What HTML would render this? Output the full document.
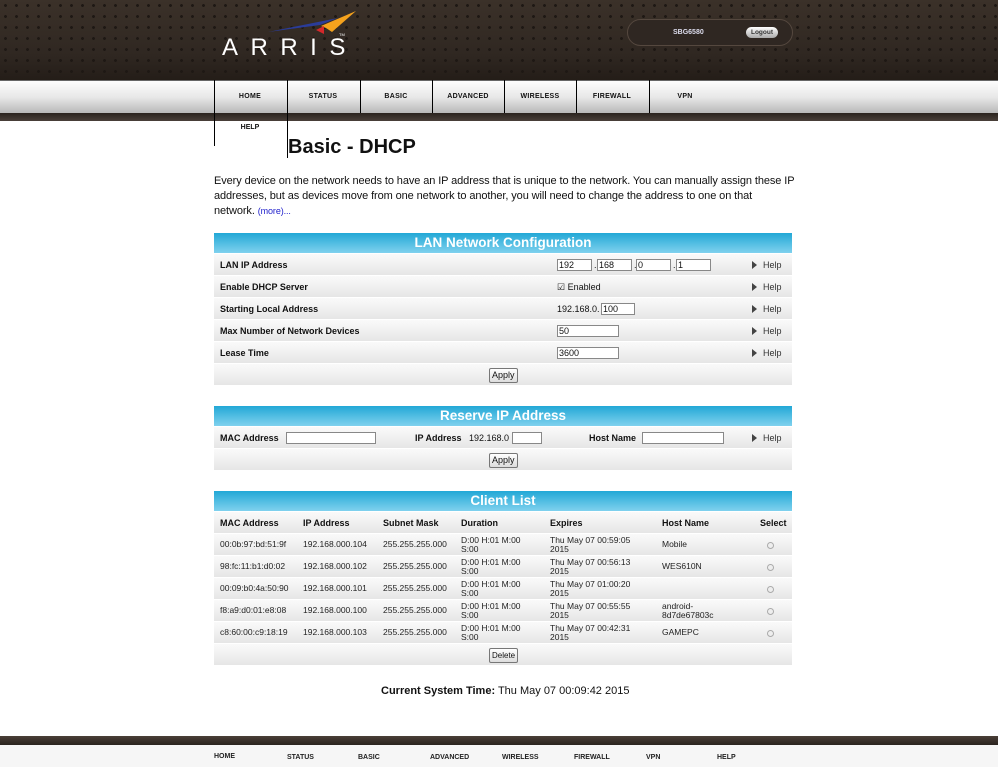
<!DOCTYPE html>
<html><head><meta charset="utf-8"><style>
*{margin:0;padding:0;box-sizing:border-box}
body{width:998px;height:767px;position:relative;overflow:hidden;background:#fff;font-family:"Liberation Sans",Arial,sans-serif;color:#111}
.a{position:absolute}
#hdr{left:0;top:0;width:998px;height:80px;background:radial-gradient(circle,#1e1814 1.3px,transparent 1.6px) 0 0/11px 11px,linear-gradient(#3b3129,#2f2721 70%,#241d18)}
#nav{left:0;top:80px;width:998px;height:33px;background:linear-gradient(#fdfdfd,#e8e8e8 50%,#b8b8b8);border-top:1px solid #666}
#navb{left:0;top:113px;width:998px;height:8px;background:linear-gradient(#2a231e,#4a403a);}
.ni{position:absolute;top:80px;height:33px;width:72px;font-size:7px;font-weight:bold;text-align:center;line-height:33px;letter-spacing:.3px}
.vl{position:absolute;width:1px;background:#000}
h1{position:absolute;left:288px;top:136px;font-size:20px;font-weight:bold}
.p{left:214px;top:174px;width:590px;font-size:11px;line-height:15px;letter-spacing:-0.1px}
.p span{color:#22c;font-size:9px}
.th{position:absolute;left:214px;width:578px;height:20px;background:linear-gradient(#22a8d6,#7fd1ee);color:#fff;font-weight:bold;font-size:13.5px;text-align:center;line-height:20px}
.r{position:absolute;left:214px;width:578px;height:22px;background:linear-gradient(#fafafa,#e6e6e6);border-bottom:1px solid #fff;font-size:9px}
.r b{position:absolute;top:6px;left:6px}
.r .t{position:absolute;top:6px}
.hp{position:absolute;left:538px;top:6px;font-size:9px;color:#333}
.hp:before{content:"";display:inline-block;border-left:5px solid #444;border-top:4px solid transparent;border-bottom:4px solid transparent;margin-right:6px;vertical-align:-1px}
.in{position:absolute;top:5px;height:12px;border:1px solid #888;background:#fff;font-size:9px;line-height:10px;padding-left:1px}
.btn{position:absolute;top:4px;left:275px;height:15px;border:1px solid #777;border-radius:2px;background:linear-gradient(#fff,#ddd);font-size:9px;line-height:13px;padding:0 2px}
.c{position:absolute;font-size:8.5px;line-height:9px;color:#222}
.rad{position:absolute;left:553px;top:8px;width:7px;height:7px;border-radius:50%;border:1px solid #aaa;background:#eee}
#ftb{left:0;top:736px;width:998px;height:9px;background:linear-gradient(#4a3f37,#2a231e)}
#ft{left:0;top:745px;width:998px;height:22px;background:#f6f6f6}
.fi{position:absolute;top:754px;font-size:7px;font-weight:bold;color:#222}
</style></head><body>
<div id="hdr" class="a"></div>
<svg class="a" style="left:220px;top:8px" width="145" height="52">
<path d="M48 24 L118 10 L100 17 Z" fill="#2a3c9a"/>
<path d="M101 18 L136 3 L112 24 L106 20 Z" fill="#f5a21d"/>
<path d="M96 22 L104 18 L104 26 Z" fill="#d6282b"/>
<text x="2" y="47" font-family="Liberation Sans" font-size="24" fill="#fff" letter-spacing="12.5">ARRIS</text>
<text x="119" y="28" font-size="4" fill="#fff">TM</text>
</svg>
<div class="a" style="left:627px;top:19px;width:166px;height:27px;border:1px solid #55483f;border-radius:14px;background:#2f2722"></div>
<div class="a" style="left:673px;top:29px;font-size:7px;font-weight:bold;color:#dde">SBG6580</div>
<div class="a" style="left:746px;top:27px;width:32px;height:11px;border-radius:6px;background:linear-gradient(#fff,#aaa);font-size:6.5px;font-weight:bold;text-align:center;line-height:11px;color:#333">Logout</div>
<div id="nav" class="a"></div>
<div id="navb" class="a"></div>
<div class="ni" style="left:214px">HOME</div><div class="ni" style="left:287px">STATUS</div><div class="ni" style="left:360px">BASIC</div><div class="ni" style="left:432px">ADVANCED</div><div class="ni" style="left:504px">WIRELESS</div><div class="ni" style="left:576px">FIREWALL</div><div class="ni" style="left:649px">VPN</div>
<div class="a" style="left:214px;top:124px;width:72px;text-align:center;font-size:7px;font-weight:bold">HELP</div>
<div class="vl" style="left:214px;top:80px;height:66px"></div><div class="vl" style="left:287px;top:80px;height:78px"></div>
<div class="vl" style="left:360px;top:80px;height:33px"></div><div class="vl" style="left:432px;top:80px;height:33px"></div><div class="vl" style="left:504px;top:80px;height:33px"></div><div class="vl" style="left:576px;top:80px;height:33px"></div><div class="vl" style="left:649px;top:80px;height:33px"></div>
<h1>Basic - DHCP</h1>
<div class="a p">Every device on the network needs to have an IP address that is unique to the network. You can manually assign these IP<br>addresses, but as devices move from one network to another, you will need to change the address to one on that<br>network. <span>(more)...</span></div>

<div class="th" style="top:233px">LAN Network Configuration</div>
<div class="r" style="top:254px"><b>LAN IP Address</b><div class="in" style="left:343px;width:35px">192</div><span class="t" style="left:380px">.</span><div class="in" style="left:383px;width:35px">168</div><span class="t" style="left:420px">.</span><div class="in" style="left:422px;width:35px">0</div><span class="t" style="left:459px">.</span><div class="in" style="left:462px;width:35px">1</div><span class="hp">Help</span></div>
<div class="r" style="top:276px"><b>Enable DHCP Server</b><span class="t" style="left:343px">☑ Enabled</span><span class="hp">Help</span></div>
<div class="r" style="top:298px"><b>Starting Local Address</b><span class="t" style="left:343px">192.168.0.</span><div class="in" style="left:387px;width:34px">100</div><span class="hp">Help</span></div>
<div class="r" style="top:320px"><b>Max Number of Network Devices</b><div class="in" style="left:343px;width:62px">50</div><span class="hp">Help</span></div>
<div class="r" style="top:342px"><b>Lease Time</b><div class="in" style="left:343px;width:62px">3600</div><span class="hp">Help</span></div>
<div class="r" style="top:364px"><div class="btn">Apply</div></div>

<div class="th" style="top:406px">Reserve IP Address</div>
<div class="r" style="top:427px"><b>MAC Address</b><div class="in" style="left:72px;width:90px"></div><b style="left:201px">IP Address</b><span class="t" style="left:255px">192.168.0</span><div class="in" style="left:298px;width:30px"></div><b style="left:375px">Host Name</b><div class="in" style="left:428px;width:82px"></div><span class="hp">Help</span></div>
<div class="r" style="top:449px"><div class="btn">Apply</div></div>

<div class="th" style="top:491px">Client List</div>
<div class="r" style="top:512px;font-weight:bold"><span class="t" style="left:6px">MAC Address</span><span class="t" style="left:89px">IP Address</span><span class="t" style="left:169px">Subnet Mask</span><span class="t" style="left:247px">Duration</span><span class="t" style="left:336px">Expires</span><span class="t" style="left:448px">Host Name</span><span class="t" style="left:546px">Select</span></div>
<div class="r" style="top:534px"><span class="c" style="left:6px;top:6px">00:0b:97:bd:51:9f</span><span class="c" style="left:89px;top:6px">192.168.000.104</span><span class="c" style="left:169px;top:6px">255.255.255.000</span><span class="c" style="left:247px;top:2px">D:00 H:01 M:00<br>S:00</span><span class="c" style="left:336px;top:2px">Thu May 07 00:59:05<br>2015</span><span class="c" style="left:448px;top:6px">Mobile</span><span class="rad"></span></div>
<div class="r" style="top:556px"><span class="c" style="left:6px;top:6px">98:fc:11:b1:d0:02</span><span class="c" style="left:89px;top:6px">192.168.000.102</span><span class="c" style="left:169px;top:6px">255.255.255.000</span><span class="c" style="left:247px;top:2px">D:00 H:01 M:00<br>S:00</span><span class="c" style="left:336px;top:2px">Thu May 07 00:56:13<br>2015</span><span class="c" style="left:448px;top:6px">WES610N</span><span class="rad"></span></div>
<div class="r" style="top:578px"><span class="c" style="left:6px;top:6px">00:09:b0:4a:50:90</span><span class="c" style="left:89px;top:6px">192.168.000.101</span><span class="c" style="left:169px;top:6px">255.255.255.000</span><span class="c" style="left:247px;top:2px">D:00 H:01 M:00<br>S:00</span><span class="c" style="left:336px;top:2px">Thu May 07 01:00:20<br>2015</span><span class="rad"></span></div>
<div class="r" style="top:600px"><span class="c" style="left:6px;top:6px">f8:a9:d0:01:e8:08</span><span class="c" style="left:89px;top:6px">192.168.000.100</span><span class="c" style="left:169px;top:6px">255.255.255.000</span><span class="c" style="left:247px;top:2px">D:00 H:01 M:00<br>S:00</span><span class="c" style="left:336px;top:2px">Thu May 07 00:55:55<br>2015</span><span class="c" style="left:448px;top:2px">android-<br>8d7de67803c</span><span class="rad"></span></div>
<div class="r" style="top:622px"><span class="c" style="left:6px;top:6px">c8:60:00:c9:18:19</span><span class="c" style="left:89px;top:6px">192.168.000.103</span><span class="c" style="left:169px;top:6px">255.255.255.000</span><span class="c" style="left:247px;top:2px">D:00 H:01 M:00<br>S:00</span><span class="c" style="left:336px;top:2px">Thu May 07 00:42:31<br>2015</span><span class="c" style="left:448px;top:6px">GAMEPC</span><span class="rad"></span></div>
<div class="r" style="top:644px"><div class="btn" style="font-size:8px">Delete</div></div>

<div class="a" style="left:381px;top:685px;font-size:11px"><b>Current System Time:</b> Thu May 07 00:09:42 2015</div>
<div id="ftb" class="a"></div><div id="ft" class="a"></div>
<div class="fi" style="left:214px;top:753px">HOME</div><div class="fi" style="left:287px">STATUS</div><div class="fi" style="left:358px">BASIC</div><div class="fi" style="left:430px">ADVANCED</div><div class="fi" style="left:502px">WIRELESS</div><div class="fi" style="left:574px">FIREWALL</div><div class="fi" style="left:646px">VPN</div><div class="fi" style="left:717px">HELP</div>
</body></html>
